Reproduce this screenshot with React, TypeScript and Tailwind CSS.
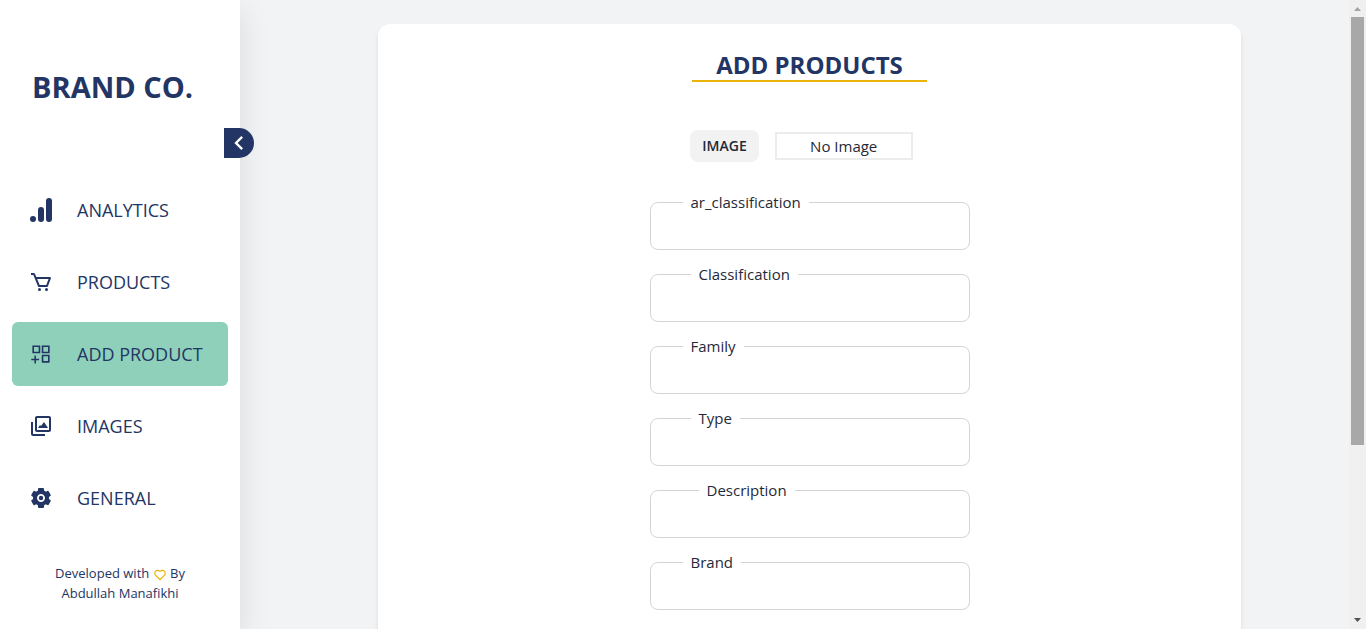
import { useState } from "react";
import type { ReactNode } from "react";
import { AiOutlineAppstoreAdd } from "react-icons/ai";
import { BiCart, BiHeart, BiImages, BiSolidCog } from "react-icons/bi";
import { MdChevronLeft } from "react-icons/md";

function AnalyticsIcon() {
  return (
    <svg viewBox="0 0 24 24" className="size-6" fill="currentColor" aria-hidden="true">
      <circle cx="4" cy="21" r="3" />
      <rect x="9" y="9" width="6" height="15" rx="3" />
      <rect x="17" y="0" width="6" height="24" rx="3" />
    </svg>
  );
}

function GearIcon() {
  return (
    <svg viewBox="0 0 24 24" className="size-6" fill="currentColor" aria-hidden="true">
      <BiSolidCog size={24} />
      <circle cx="12" cy="12" r="2.2" />
    </svg>
  );
}

type NavItem = { label: string; icon: ReactNode; active?: boolean };

const navItems: NavItem[] = [
  { label: "ANALYTICS", icon: <AnalyticsIcon /> },
  { label: "PRODUCTS", icon: <BiCart className="size-6" /> },
  { label: "ADD PRODUCT", icon: <AiOutlineAppstoreAdd className="size-6" />, active: true },
  { label: "IMAGES", icon: <BiImages className="size-6" /> },
  { label: "GENERAL", icon: <GearIcon /> },
];

const fields = [
  { label: "ar_classification", indent: "ml-8" },
  { label: "Classification", indent: "ml-10" },
  { label: "Family", indent: "ml-8" },
  { label: "Type", indent: "ml-10" },
  { label: "Description", indent: "ml-12" },
  { label: "Brand", indent: "ml-8" },
  { label: "Validity", indent: "ml-8" },
];

function Sidebar() {
  return (
    <aside className="relative z-10 flex w-60 shrink-0 flex-col bg-white text-[#223564] shadow-[0_10px_30px_rgba(0,0,0,0.1)]">
      <h2 className="px-8 pt-16 text-[29px] leading-[46px] font-bold whitespace-nowrap">BRAND CO.</h2>
      <button
        type="button"
        aria-label="Collapse menu"
        className="absolute top-32 -right-3.5 flex h-[30px] w-[30px] items-center justify-center rounded-r-full bg-[#223564] text-white"
      >
        <MdChevronLeft className="size-7" />
      </button>
      <nav className="mt-[68px] flex flex-col gap-2 px-3">
        {navItems.map((item) => (
          <a
            key={item.label}
            href="#"
            className={
              item.active
                ? "flex h-16 items-center gap-6 rounded-md bg-[#8ed0ba] px-[17px] text-lg font-medium"
                : "flex h-16 items-center gap-6 rounded-md px-[17px] text-lg font-medium"
            }
          >
            {item.icon}
            {item.label}
          </a>
        ))}
      </nav>
      <p className="mt-[33px] text-center text-[13px] leading-5">
        Developed with <BiHeart className="inline size-3.5 text-[#eab308]" /> By
        <br />
        Abdullah Manafikhi
      </p>
    </aside>
  );
}

function Field({ label, indent }: { label: string; indent: string }) {
  const [value, setValue] = useState("");
  return (
    <fieldset className="h-[60px] w-80 rounded-lg border border-[#d3d4d6]">
      <legend className={`${indent} px-2 text-[15px] leading-6`}>
        <label htmlFor={label}>{label}</label>
      </legend>
      <input
        id={label}
        value={value}
        onChange={(e) => setValue(e.target.value)}
        className="block h-8 w-full bg-transparent px-4 text-[15px] outline-none"
      />
    </fieldset>
  );
}

function ScrollTrack() {
  return (
    <div aria-hidden="true" className="flex w-[17px] shrink-0 flex-col items-center bg-[#f0f0f0]">
      <svg viewBox="0 0 17 17" className="h-[17px] w-full shrink-0" fill="#a3a3a3">
        <path d="M8.5 7 L12 11 H5 Z" />
      </svg>
      <div className="flex w-full grow flex-col px-0.5">
        <div className="h-[72%] bg-[#a8a8a8]" />
      </div>
      <svg viewBox="0 0 17 17" className="h-[17px] w-full shrink-0" fill="#505050">
        <path d="M8.5 10 L5 6 H12 Z" />
      </svg>
    </div>
  );
}

export default function App() {
  return (
    <div className="flex h-screen overflow-hidden bg-[#f2f3f5] font-['Open_Sans','Noto_Sans',sans-serif] text-[#1f2937]">
      <Sidebar />
      <main className="flex min-w-0 grow justify-center overflow-hidden pt-6 pl-[30px]">
        <form className="flex h-max w-4/5 flex-col items-center rounded-xl bg-white pb-10 shadow-md">
          <h1 className="mt-[26px] border-b-2 border-[#eab308] px-6 text-2xl leading-[30px] font-bold text-[#223564]">
            ADD PRODUCTS
          </h1>
          <div className="mt-12 flex items-center">
            <button type="button" className="mr-4 h-8 rounded-lg bg-[#f2f2f2] px-3 text-sm font-semibold">
              IMAGE
            </button>
            <output className="mr-4 h-7 w-[138px] border-2 border-[#ececec] text-center text-[15px] leading-6">
              No Image
            </output>
          </div>
          <div className="mt-7 flex flex-col gap-3">
            {fields.map((field) => (
              <Field key={field.label} {...field} />
            ))}
          </div>
        </form>
      </main>
      <ScrollTrack />
    </div>
  );
}
